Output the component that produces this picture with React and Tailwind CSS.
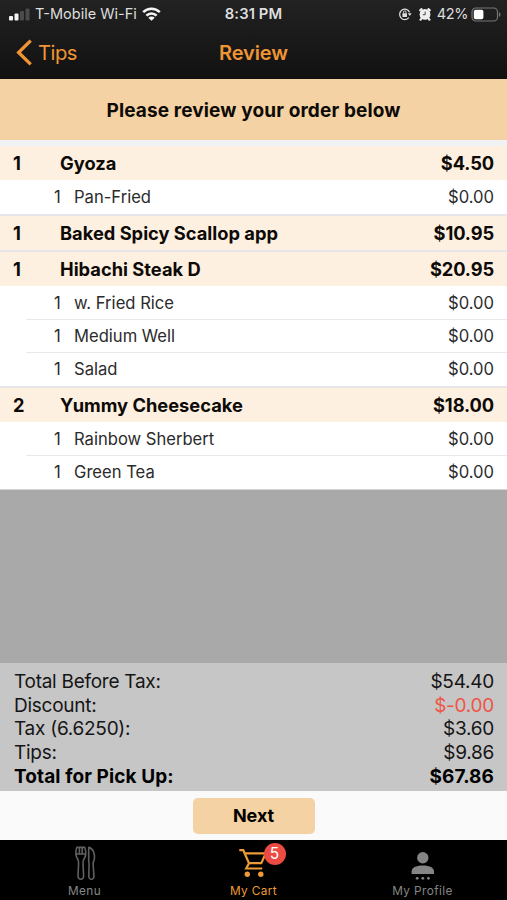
import clsx from 'clsx'

const items = [
  { qty: 1, name: 'Gyoza', price: '$4.50', options: ['Pan-Fried'] },
  { qty: 1, name: 'Baked Spicy Scallop app', price: '$10.95', options: [] },
  { qty: 1, name: 'Hibachi Steak D', price: '$20.95', options: ['w. Fried Rice', 'Medium Well', 'Salad'] },
  { qty: 2, name: 'Yummy Cheesecake', price: '$18.00', options: ['Rainbow Sherbert', 'Green Tea'] },
]

const totals = [
  { label: 'Total Before Tax:', value: '$54.40' },
  { label: 'Discount:', value: '$-0.00', negative: true },
  { label: 'Tax (6.6250):', value: '$3.60' },
  { label: 'Tips:', value: '$9.86' },
  { label: 'Total for Pick Up:', value: '$67.86', bold: true },
]

function StatusBar() {
  return (
    <div className="grid h-7 grid-cols-[1fr_auto_1fr] items-center px-[7px] text-[14.5px] text-[#dedede]">
      <div className="flex items-center">
        {/* Signal strength */}
        <svg className="h-3.5 w-[23px]" viewBox="0 0 23 14">
          <rect x="2" y="9" width="4" height="4.5" rx="1" fill="#f4f4f4" />
          <rect x="7.5" y="6.5" width="4" height="7" rx="1" fill="#f4f4f4" />
          <rect x="13" y="4" width="4" height="9.5" rx="1" fill="#4b4b4b" />
          <rect x="18.5" y="1.5" width="4" height="12" rx="1" fill="#4b4b4b" />
        </svg>
        <span className="ml-[5px]">T-Mobile Wi-Fi</span>
        {/* Wi-Fi */}
        <svg className="ml-[5px] h-[14px] w-[19px]" viewBox="0 0 19 14" fill="none" stroke="#f4f4f4" strokeWidth="2.6">
          <path d="M1.2 5.2a11.7 11.7 0 0 1 16.6 0" />
          <path d="M4.4 8.6a7.2 7.2 0 0 1 10.2 0" />
          <path d="M9.5 13.8 6.3 10.8a4.5 4.5 0 0 1 6.4 0z" fill="#f4f4f4" stroke="none" />
        </svg>
      </div>
      <span className="text-[14.8px] font-semibold tracking-[0.1px]">8:31 PM</span>
      <div className="-mr-px flex items-center justify-end">
        {/* Rotation lock */}
        <svg className="h-[14px] w-[14px]" viewBox="0 0 14 14" fill="none" stroke="#dedede" strokeWidth="1.3">
          <path d="M10.9 10.6A5.2 5.2 0 1 1 11.6 5.2" />
          <path d="M9.8 6.2h3.8L11.8 9z" fill="#dedede" stroke="none" />
          <rect x="4.4" y="6.3" width="4.6" height="3.7" rx="0.6" fill="#dedede" stroke="none" />
          <path d="M5.4 6.5V5.2a1.3 1.3 0 0 1 2.6 0v1.3" strokeWidth="1" />
        </svg>
        {/* Alarm */}
        <svg className="ml-1.5 h-[14px] w-[14px]" viewBox="0 0 14 14">
          <circle cx="7" cy="7.4" r="5.4" fill="#eee" />
          <path d="M2.2 3.4 3.6 2.2M11.8 3.4 10.4 2.2M3.2 11.8l-.6.8M10.8 11.8l.6.8" stroke="#eee" strokeWidth="2.2" strokeLinecap="round" />
          <path d="M7.2 4.6v3.1H4.8" stroke="#333" strokeWidth="0.9" fill="none" />
        </svg>
        <span className="ml-[5px] tracking-[-0.4px]">42%</span>
        {/* Battery */}
        <svg className="ml-[3px] h-[15px] w-[30px]" viewBox="0 0 30 15">
          <rect x="1" y="1" width="25.5" height="13" rx="3.8" fill="none" stroke="#777" strokeWidth="1.2" />
          <rect x="2.8" y="2.8" width="9.6" height="9.4" rx="1.8" fill="#fff" />
          <path d="M28 5.2c2 .8 2 3.8 0 4.6z" fill="#777" />
        </svg>
      </div>
    </div>
  )
}

function NavBar() {
  return (
    <div className="grid h-[51px] grid-cols-[1fr_auto_1fr] items-center px-4 pb-[2px] text-[#ef9534]">
      <div className="flex items-center">
        <svg className="h-[27px] w-4" viewBox="0 0 16 27" fill="none" stroke="currentColor" strokeWidth="3.3">
          <path d="M14.7 1.6 2.6 13.5l12.1 11.9" />
        </svg>
        <span className="ml-1.5 text-[20.2px] leading-6 tracking-[-0.5px]">Tips</span>
      </div>
      <span className="text-[20px] font-semibold leading-6 tracking-[-0.1px]">Review</span>
    </div>
  )
}

function OrderItem({ item, first }) {
  return (
    <div>
      <div
        className={clsx(
          'flex items-center bg-[#fdf0e0] px-[13px] pt-px text-[18.3px] font-bold text-[#0d0a07]',
          first ? 'h-[34px]' : 'h-9 border-t-2 border-[#e6e6ea]'
        )}
      >
        <span className="w-[47px]">{item.qty}</span>
        <span className="flex-1">{item.name}</span>
        <span className="tracking-[-0.1px]">{item.price}</span>
      </div>
      {item.options.map((option, i) => (
        <div key={option} className="pl-[26px] last:pb-px">
          <div
            className={clsx(
              'flex h-[33px] items-center pl-7 pr-[13px] text-[16.6px] text-[#2b2b2b]',
              i > 0 ? 'border-t border-[#e9e9eb]' : 'pt-px'
            )}
          >
            <span className="w-5">1</span>
            <span className="flex-1">{option}</span>
            <span>$0.00</span>
          </div>
        </div>
      ))}
    </div>
  )
}

function Totals() {
  return (
    <div className="h-[128px] bg-[#c6c6c6] pl-3.5 pr-[13px] pt-[7px] text-[19px] text-[#151515]">
      {totals.map((row) => (
        <div
          key={row.label}
          className={clsx(
            'flex h-[23.6px] items-center justify-between',
            row.bold ? 'font-bold tracking-[0.1px] text-black' : 'tracking-[-0.26px]'
          )}
        >
          <span>{row.label}</span>
          <span className={clsx(row.negative && 'text-[#ee5546]')}>{row.value}</span>
        </div>
      ))}
    </div>
  )
}

function TabBar() {
  return (
    <div className="grid h-[60px] grid-cols-3 bg-black pt-1 text-[11.8px] text-[#858585]">
      <div className="flex flex-col items-center">
        {/* Fork and knife */}
        <svg className="h-[38px] w-6" viewBox="0 0 24 38" fill="none" stroke="#606060" strokeWidth="1.6" strokeLinejoin="round" strokeLinecap="round">
          <path d="M3.8 3.4C2.6 7.5 2.6 11.8 4.2 14.2c1.1 1.6 1.5 2.4 1.4 4.6L5 32.2c-.1 4 5.7 4 5.6 0L10 18.8c-.1-2.2.3-3 1.4-4.6 1.6-2.4 1.6-6.7.4-10.8z" />
          <path d="M6.4 3.6v6M9.2 3.6v6M3.2 10h9.2" />
          <path d="M15.7 3.4c4.2.9 6.3 6.2 5.7 11.2-.3 2.4-1.4 3-1.3 5.2l.8 12.4c.2 4-5.2 4-5.1 0l.3-12.4c0-1-.4-1.6-.4-3z" />
        </svg>
        <span className="mt-1 tracking-[0.4px]">Menu</span>
      </div>
      <div className="flex flex-col items-center text-[#ee9a38]">
        <div className="relative">
          <svg className="h-[38px] w-8" viewBox="0 0 32 38" fill="none" stroke="currentColor" strokeWidth="2.2">
            <path d="M1.3 6.2h4l5.7 13-2.8 5.3h16" />
            <path d="M6.7 9.4h21l-4.4 9.8H11" />
            <circle cx="9.3" cy="30.3" r="2.7" fill="currentColor" stroke="none" />
            <circle cx="22.8" cy="30.3" r="2.7" fill="currentColor" stroke="none" />
          </svg>
          <span className="absolute -top-px left-[26px] flex h-[22px] w-[22px] items-center justify-center rounded-full bg-[#eb4b42] text-[15.5px] text-white">
            5
          </span>
        </div>
        <span className="mt-1 tracking-[0.4px]">My Cart</span>
      </div>
      <div className="flex flex-col items-center">
        {/* Profile */}
        <svg className="h-[38px] w-6" viewBox="0 0 24 38" fill="#858585">
          <circle cx="11.8" cy="13.7" r="5.7" />
          <path d="M.6 30v-2.4c0-3.8 4-6 11.2-6s11.2 2.2 11.2 6V30z" />
          <circle cx="6.2" cy="34.3" r="1.4" />
          <circle cx="11.8" cy="34.3" r="1.4" />
          <circle cx="17.4" cy="34.3" r="1.4" />
        </svg>
        <span className="mt-1 tracking-[0.4px]">My Profile</span>
      </div>
    </div>
  )
}

export default function App() {
  return (
    <div className="flex h-[900px] w-[507px] flex-col overflow-hidden bg-[#a9a9a9] font-['Inter','Liberation_Sans',sans-serif] leading-none">
      <header className="bg-linear-to-b from-[#222222] to-[#111111]">
        <StatusBar />
        <NavBar />
      </header>

      <div className="flex h-[61px] items-center justify-center bg-[#f4d2a3] pt-px text-[19px] font-bold tracking-[0.13px] text-[#0d0a07]">
        Please review your order below
      </div>

      <main className="border-b border-t-[6px] border-b-[#d5d5d5] border-t-[#f0f1f3] bg-white">
        {items.map((item, i) => (
          <OrderItem key={item.name} item={item} first={i === 0} />
        ))}
      </main>

      <div className="flex-1" />

      <Totals />
      <div className="flex h-[49px] items-center justify-center bg-[#fafafa]">
        <button className="h-9 w-[122px] rounded-[5px] bg-[#f4d2a3] pt-px text-[18px] font-bold tracking-[-0.1px] text-black">Next</button>
      </div>
      <TabBar />
    </div>
  )
}
